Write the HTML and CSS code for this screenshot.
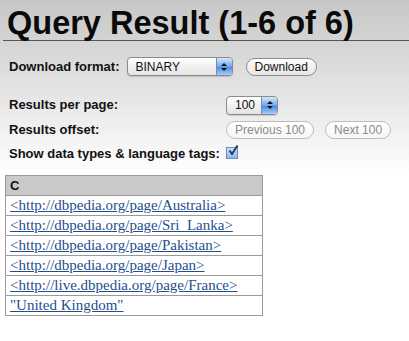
FILE: index.html
```html
<!DOCTYPE html>
<html lang="en">
<head>
    <meta charset="UTF-8">
    <title>Query Result</title>
    <link rel="stylesheet" href="styles.css">
</head>
<body>
    <h1 class="page-title">Query Result (1-6 of 6)</h1>
    <div class="download-row">
        <span class="label">Download format:</span>
        <div class="mac-select wide">
            <span class="select-text">BINARY</span>
            <span class="stepper"><i class="up"></i><i class="down"></i></span>
        </div>
        <button class="mac-btn">Download</button>
    </div>
    <div class="options">
        <span class="label">Results per page:</span>
        <div class="cell">
            <div class="mac-select">
                <span class="select-text">100</span>
                <span class="stepper"><i class="up"></i><i class="down"></i></span>
            </div>
        </div>
        <span class="label">Results offset:</span>
        <div class="cell btn-pair">
            <button class="mac-btn disabled">Previous 100</button>
            <button class="mac-btn disabled">Next 100</button>
        </div>
        <span class="label">Show data types &amp; language tags:</span>
        <div class="cell">
            <span class="checkbox">
                <svg width="12" height="12" viewBox="0 0 12 12">
                    <path d="M2.5 5.5 L5 9 L10.5 0.5" fill="none" stroke="#1d3f7a" stroke-width="2"/>
                </svg>
            </span>
        </div>
    </div>
    <table class="results">
        <tr><th>C</th></tr>
        <tr><td><a href="#">&lt;http://dbpedia.org/page/Australia&gt;</a></td></tr>
        <tr><td><a href="#">&lt;http://dbpedia.org/page/Sri_Lanka&gt;</a></td></tr>
        <tr><td><a href="#">&lt;http://dbpedia.org/page/Pakistan&gt;</a></td></tr>
        <tr><td><a href="#">&lt;http://dbpedia.org/page/Japan&gt;</a></td></tr>
        <tr><td><a href="#">&lt;http://live.dbpedia.org/page/France&gt;</a></td></tr>
        <tr><td><a href="#">"United Kingdom"</a></td></tr>
    </table>
</body>
</html>
```
FILE: styles.css
```css
body {
    margin: 0;
    font-family: "Liberation Sans", Arial, sans-serif;
    background: linear-gradient(#c7c7c7, #ffffff 175px) no-repeat;
    background-color: #fff;
    min-height: 341px;
    color: #111;
}
.page-title {
    font-size: 32.5px;
    font-weight: bold;
    margin: 0 0 0 3px;
    padding: 6px 0 0 4px;
    height: 34px;
    line-height: 34px;
    border-bottom: 1px solid #555;
    color: #0a0a0a;
}
.label {
    font-size: 13px;
    font-weight: bold;
}
.download-row {
    display: flex;
    align-items: center;
    padding: 16px 0 0 9px;
}
.download-row .mac-select {
    margin-left: 7px;
}
.download-row .mac-btn {
    margin-left: 13px;
}
.mac-select {
    position: relative;
    display: inline-flex;
    align-items: center;
    height: 17px;
    width: 50px;
    border: 1px solid #8b8b8b;
    border-radius: 4px;
    background: linear-gradient(#ffffff, #f1f1f1 50%, #e4e4e4);
    box-shadow: 0 1px 1px rgba(0,0,0,0.15);
    font-size: 12px;
    overflow: hidden;
}
.mac-select.wide {
    width: 104px;
}
.select-text {
    padding-left: 8px;
    flex: 1;
}
.stepper {
    width: 15px;
    height: 17px;
    background: linear-gradient(#d6e7fb, #6ea6ec 50%, #4c8de6 55%, #a9cdf5);
    border-left: 1px solid #6a8ec1;
    display: flex;
    flex-direction: column;
    align-items: center;
    justify-content: center;
    gap: 2px;
}
.stepper i {
    width: 0;
    height: 0;
    border-left: 3px solid transparent;
    border-right: 3px solid transparent;
}
.stepper .up {
    border-bottom: 3px solid #111;
}
.stepper .down {
    border-top: 3px solid #111;
}
.mac-btn {
    font-family: "Liberation Sans", Arial, sans-serif;
    font-size: 12px;
    color: #111;
    height: 18px;
    padding: 0 8px;
    border: 1px solid #8e8e8e;
    border-radius: 9px;
    background: linear-gradient(#ffffff, #f2f2f2 50%, #e6e6e6);
    line-height: 16px;
}
.mac-btn.disabled {
    color: #8a8a8a;
    border-color: #bdbdbd;
    background: linear-gradient(#ffffff, #f6f6f6);
}
.options {
    display: grid;
    grid-template-columns: 217px auto;
    align-items: center;
    row-gap: 6px;
    padding: 19px 0 0 9px;
}
.btn-pair {
    display: flex;
    gap: 11px;
}
.checkbox {
    display: inline-block;
    position: relative;
    width: 10px;
    height: 10px;
    border: 1px solid #6f8fb9;
    background: linear-gradient(#cfe1f7, #8db9ee);
}
.checkbox svg {
    position: absolute;
    left: 0;
    top: -3px;
}
.results {
    margin: 12px 0 0 5px;
    width: 258px;
    border-collapse: collapse;
    border: 1px solid #9a9a9a;
    background: #fff;
}
.results th {
    background: #c9c9c9;
    text-align: left;
    font-size: 13px;
    height: 19px;
    padding: 0 4px;
    border-bottom: 1px solid #9a9a9a;
}
.results td {
    font-family: "Liberation Serif", "Times New Roman", serif;
    font-size: 15px;
    height: 19px;
    padding: 0 4px;
    border-bottom: 1px solid #9a9a9a;
}
.results a {
    color: #1f4f8c;
}
```
